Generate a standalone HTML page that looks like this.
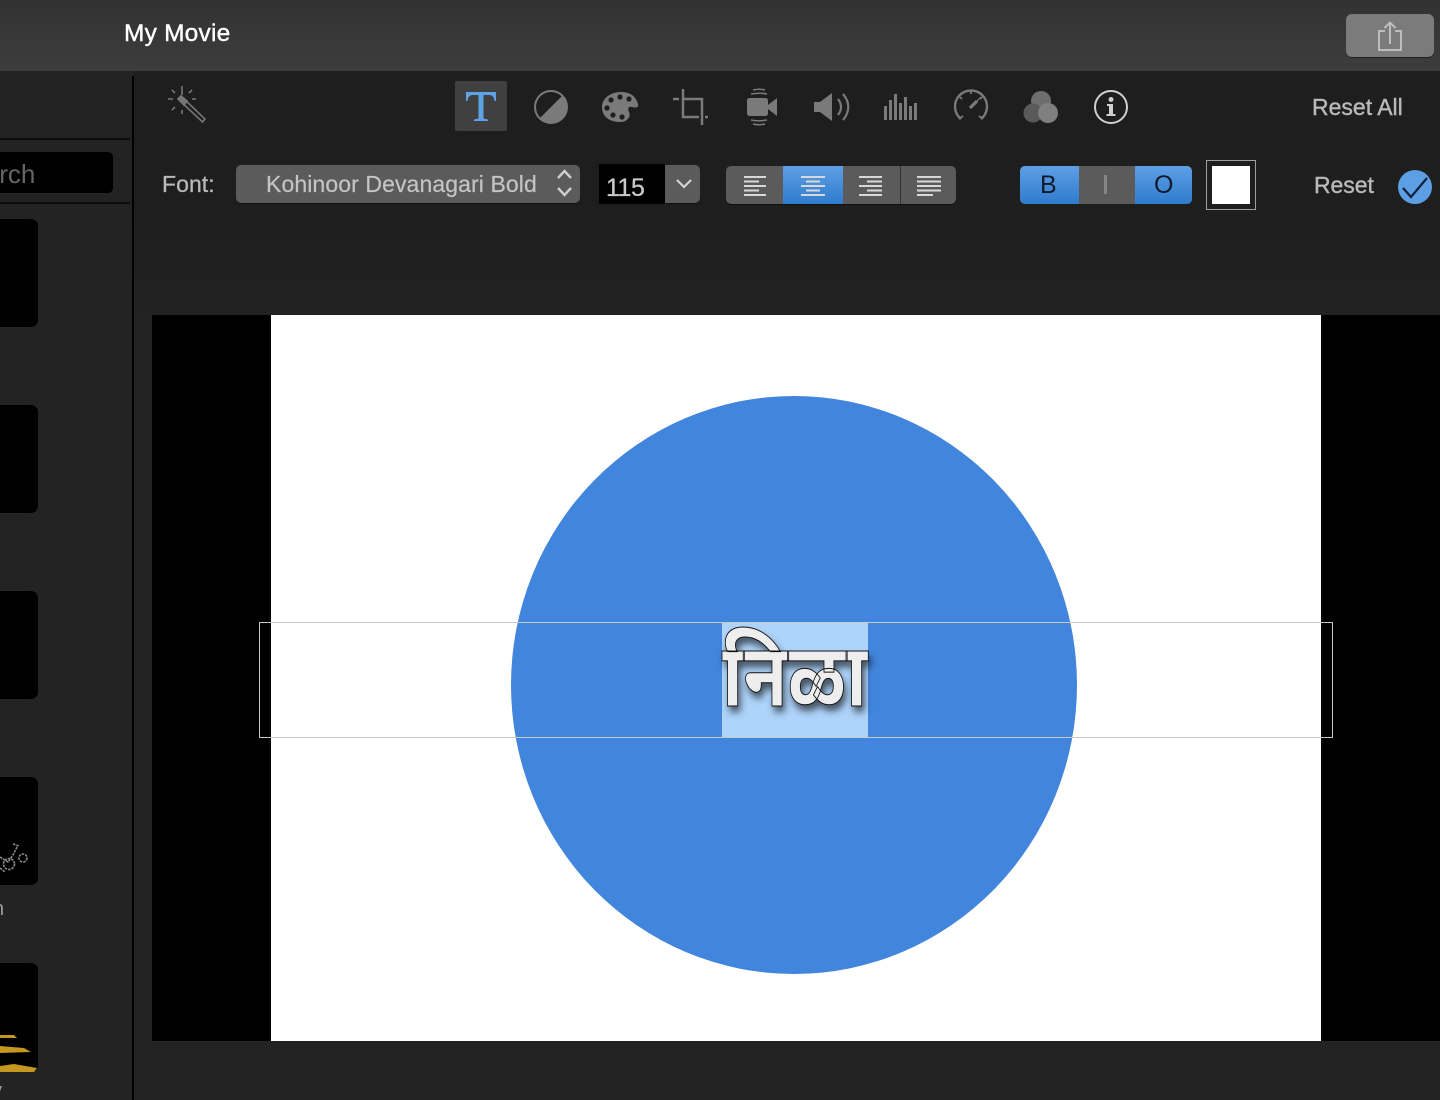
<!DOCTYPE html>
<html lang="en"><head><meta charset="utf-8"><title>My Movie</title>
<style>
html,body{margin:0;padding:0;background:#232323}
body{position:relative;width:1440px;height:1100px;overflow:hidden;font-family:"Liberation Sans",sans-serif}
.a{position:absolute}
.t{position:absolute;white-space:nowrap;line-height:1}
.grad{background:linear-gradient(#5e9fe6,#2f7ccd)}
.g{background:#5b5b5b}
svg{position:absolute;overflow:visible}
</style></head><body>
<div class="a" style="left:0;top:0;width:1440px;height:71px;background:linear-gradient(#323232,#3d3d3d)"></div>
<div class="t" style="left:124px;top:22px;font-size:24.5px;letter-spacing:.2px;color:#fff;-webkit-text-stroke:.4px #fff">My Movie</div>
<div class="a" style="left:1346px;top:14px;width:88px;height:43px;border-radius:6px;background:#7b7b7b;box-shadow:0 1px 0 #222"></div>
<svg style="left:1346px;top:14px" width="88" height="43" fill="none" stroke="#bdbdbd" stroke-width="2"><path d="M39 17H33V36H55V17H49M44 30V9M38.500 14L44 8.500L49.500 14"/></svg>

<div class="a" style="left:134px;top:71px;width:1306px;height:244px;background:linear-gradient(#1e1e1e 0,#1e1e1e 55%,#222 100%)"></div>
<div class="a" style="left:0;top:71px;width:132px;height:1029px;background:#232323"></div>
<div class="a" style="left:132px;top:76px;width:2px;height:1024px;background:#000"></div>
<div class="a" style="left:0;top:138px;width:130px;height:2px;background:#0d0d0d"></div>
<div class="a" style="left:0;top:202px;width:130px;height:2px;background:#0d0d0d"></div>
<div class="a" style="left:-10px;top:152px;width:123px;height:41px;background:#000;border-radius:5px"></div>
<div class="t" style="left:-47px;top:161px;font-size:26px;color:#666">Search</div>

<div class="a" style="left:-20px;top:219px;width:58px;height:108px;background:#000;border-radius:7px"></div>
<div class="a" style="left:-20px;top:405px;width:58px;height:108px;background:#000;border-radius:7px"></div>
<div class="a" style="left:-20px;top:591px;width:58px;height:108px;background:#000;border-radius:7px"></div>
<div class="a" style="left:-20px;top:777px;width:58px;height:108px;background:#000;border-radius:7px"></div>
<div class="a" style="left:-20px;top:963px;width:58px;height:109px;background:#000;border-radius:7px"></div>
<svg style="left:0;top:835px" width="30" height="40" fill="none" stroke="#8a8a8a" stroke-width="1.600" stroke-dasharray="2.500 1"><circle cx="23" cy="23" r="4"/><circle cx="9" cy="29" r="5.500"/><path d="M0 22L8 27L13 20L17 12M13 9L19 11"/><path d="M0 33L5 37"/></svg>
<svg style="left:0;top:1030px" width="40" height="44" fill="#c4981f"><path d="M0 5H14L17 8H0Z"/><path d="M0 16L12 17L24 18L31 22L0 23Z"/><path d="M0 36L14 34L37 38L34 42H0Z"/></svg>
<div class="t" style="left:-7px;top:899px;font-size:20px;color:#9a9a9a">n</div>
<div class="t" style="left:-7px;top:1081px;font-size:18px;color:#9a9a9a">y</div>

<svg style="left:160px;top:80px" width="50" height="50" fill="none" stroke="#777" stroke-width="1.600"><path d="M22 6V15M22 30V34M8 19H13M32 19H36M12 10L15 13M32 10L29 13M12 30L15 27"/><path d="M18 19L21 16L45 39L42.500 42Z"/><path d="M18 19L21 16L27 21L24 25Z" fill="#777"/></svg>

<div class="a" style="left:455px;top:81px;width:52px;height:50px;background:#404040;border-radius:2px"></div>
<svg style="left:455px;top:81px" width="52" height="50" fill="#5ea3e8"><path d="M11 11H41V20H39.500C39 15.500 37 14 34 14H28.500V37.500L33 38.500V40H19V38.500L23.500 37.500V14H18C15 14 13 15.500 12.500 20H11Z"/></svg>

<svg style="left:533px;top:89px" width="36" height="36" fill="#7a7a7a"><circle cx="18" cy="18" r="16" fill="none" stroke="#7a7a7a" stroke-width="2"/><path d="M29.500 6.500A16 16 0 0 1 6.500 29.500Z"/></svg>
<svg style="left:600px;top:90px" width="42" height="34"><path d="M2 17C2 8 11 2 21 2C31 2 36 7 38 14C39 18 35 18 32 17C29 16 27 18 29 22C31 26 28 32 20 32C10 32 2 27 2 17Z" fill="#7a7a7a"/><g fill="#1e1e1e"><circle cx="11" cy="10" r="2.600"/><circle cx="20" cy="7" r="2.600"/><circle cx="29" cy="9" r="2.600"/><circle cx="7" cy="18" r="2.600"/><circle cx="13" cy="25" r="2.600"/><circle cx="22" cy="27" r="2.600"/></g></svg>
<svg style="left:674px;top:88px" width="36" height="38" fill="none" stroke="#7a7a7a" stroke-width="2.500"><path d="M-1 11H5M9 1V29H25M9 11H28V37M31 29H34"/></svg>
<svg style="left:746px;top:88px" width="32" height="38" fill="#7a7a7a"><rect x="1" y="10" width="21" height="18" rx="2.500"/><path d="M22 17L31 10V28L22 21Z"/><path d="M7 2C11 1 15 1 19 2M5 6C10 5 16 5 21 6M5 32C10 33 16 33 21 32M7 36C11 37 15 37 19 36" fill="none" stroke="#7a7a7a" stroke-width="1.500"/></svg>
<svg style="left:813px;top:91px" width="38" height="32" fill="#7a7a7a"><path d="M1 11H7L19 2V30L7 21H1Z"/><path d="M25 8C29 13 29 19 25 24M30 3C37 11 37 21 30 29" fill="none" stroke="#7a7a7a" stroke-width="2.200"/></svg>
<svg style="left:883px;top:93px" width="36" height="28" fill="#7a7a7a"><rect x="1" y="13" width="3" height="14"/><rect x="6" y="7" width="3" height="20"/><rect x="11" y="1" width="3" height="26"/><rect x="16" y="10" width="3" height="17"/><rect x="21" y="4" width="3" height="23"/><rect x="26" y="13" width="3" height="14"/><rect x="31" y="10" width="3" height="17"/></svg>
<svg style="left:953px;top:89px" width="36" height="36" fill="none" stroke="#7a7a7a" stroke-width="2.400"><path d="M8 30A16 16 0 1 1 28 30"/><path d="M18 2V5M7 8L9 10M29 8L27 10M6 30L10 27M30 30L26 27" stroke-width="1.800"/><path d="M17 19L28 8" stroke-width="1.200"/><path d="M17 19L24 12" stroke-width="3.200"/></svg>
<svg style="left:1023px;top:90px" width="36" height="34"><circle cx="18" cy="11" r="10" fill="#6e6e6e"/><circle cx="10" cy="23" r="9.500" fill="#5a5a5a"/><circle cx="25" cy="23" r="10" fill="#7f7f7f"/></svg>
<svg style="left:1093px;top:89px" width="36" height="36"><circle cx="18" cy="18" r="16" fill="none" stroke="#d0d0d0" stroke-width="2"/><circle cx="18" cy="10.500" r="2.500" fill="#d0d0d0"/><path d="M14 15H20V25H22.500V27H13.500V25H16V17H14Z" fill="#d0d0d0"/></svg>

<div class="t" style="left:1312px;top:96px;font-size:23px;color:#b9b9b9;-webkit-text-stroke:.4px #b9b9b9">Reset All</div>

<div class="t" style="left:162px;top:173px;font-size:23px;letter-spacing:.05px;color:#b9b9b9;-webkit-text-stroke:.3px #b9b9b9">Font:</div>
<div class="a g" style="left:236px;top:165px;width:344px;height:38px;border-radius:5px;box-shadow:0 1px 0 #111"></div>
<div class="t" style="left:266px;top:173px;font-size:23px;letter-spacing:.1px;color:#c4c4c4;-webkit-text-stroke:.2px #c4c4c4">Kohinoor Devanagari Bold</div>
<svg style="left:555px;top:168px" width="20" height="32" fill="none" stroke="#cfcfcf" stroke-width="2.400"><path d="M3 10L9.500 3L16 10M3 20L9.500 27L16 20"/></svg>
<div class="a" style="left:599px;top:164px;width:66px;height:40px;background:#000"></div>
<div class="t" style="left:606px;top:176px;font-size:25px;letter-spacing:-.5px;color:#c8c8c8;-webkit-text-stroke:.3px #c8c8c8">115</div>
<div class="a g" style="left:665px;top:165px;width:35px;height:38px;border-radius:0 5px 5px 0;box-shadow:0 1px 0 #111"></div>
<svg style="left:665px;top:165px" width="35" height="38" fill="none" stroke="#d4d4d4" stroke-width="2.200"><path d="M12 15L19 22L26 15"/></svg>

<div class="a g" style="left:726px;top:166px;width:230px;height:38px;border-radius:5px;box-shadow:0 1px 0 #111"></div>
<div class="a grad" style="left:783px;top:166px;width:60px;height:38px"></div>
<div class="a" style="left:900px;top:166px;width:1px;height:38px;background:#333"></div>
<svg style="left:726px;top:166px" width="230" height="38" fill="none" stroke="#d8d8d8" stroke-width="2"><path d="M18 11H40M18 15.500H33M18 20H40M18 24.500H33M18 29H40"/><path d="M75 11H99M80 15.500H94M75 20H99M80 24.500H94M75 29H99"/><path d="M133 11H156M141 15.500H156M133 20H156M141 24.500H156M133 29H156"/><path d="M191 11H215M191 15.500H215M191 20H215M191 24.500H215M191 29H207"/></svg>

<div class="a g" style="left:1020px;top:166px;width:172px;height:38px;border-radius:5px;overflow:hidden"><div class="a grad" style="left:0;top:0;width:59px;height:38px"></div><div class="a grad" style="left:115px;top:0;width:57px;height:38px"></div></div>
<div class="t" style="left:1040px;top:173px;font-size:25px;color:#101a2a">B</div>
<div class="a" style="left:1104px;top:175px;width:3px;height:19px;background:#858585"></div>
<div class="t" style="left:1154px;top:173px;font-size:25px;color:#101a2a">O</div>
<div class="a" style="left:1206px;top:160px;width:48px;height:48px;border:1px solid #a0a0a0;background:#1e1e1e"></div>
<div class="a" style="left:1212px;top:166px;width:38px;height:38px;background:#fff"></div>

<div class="t" style="left:1314px;top:174px;font-size:23px;letter-spacing:-.05px;color:#b9b9b9;-webkit-text-stroke:.4px #b9b9b9">Reset</div>
<svg style="left:1397px;top:169px" width="36" height="36"><circle cx="18" cy="18" r="17" fill="#5c9fe4"/><path d="M6 19L14 28L30 9" fill="none" stroke="#14233a" stroke-width="2.300"/></svg>

<div class="a" style="left:152px;top:315px;width:1288px;height:726px;background:#000"></div>
<div class="a" style="left:271px;top:315px;width:1050px;height:726px;background:#fff"></div>
<div class="a" style="left:511px;top:396px;width:566px;height:578px;border-radius:50%;background:#4285dd"></div>
<div class="a" style="left:722px;top:622px;width:146px;height:116px;background:#aed4fb"></div>
<div class="a" style="left:259px;top:622px;width:1072px;height:114px;border:1px solid #c8c8c8"></div>
<div class="t" lang="mr" style="left:722px;top:621px;font-size:88px;line-height:110px;font-weight:700;color:#eee;-webkit-text-stroke:1px #111;text-shadow:3px 6px 8px rgba(0,0,0,.65);transform:scaleX(.82);transform-origin:0 0;font-family:'Liberation Sans','Noto Sans Devanagari','Lohit Devanagari','Mangal',sans-serif">निळा</div>
</body></html>
